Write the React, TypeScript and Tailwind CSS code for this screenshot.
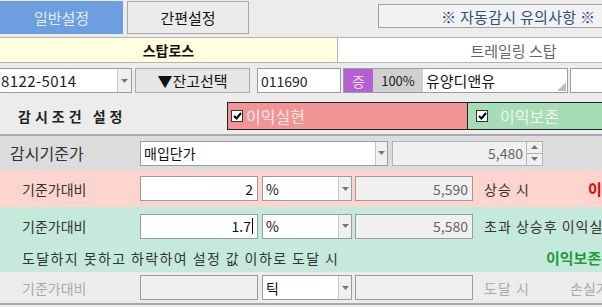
import React from "react";

const Arrow = ({ w = 13 }: { w?: number }) => (
  <div className="h-full shrink-0 flex items-center justify-center bg-[#f0f0f0] border-l border-[#c8c8c8]" style={{ width: w }}>
    <svg width="7" height="4" viewBox="0 0 7 4"><path d="M0 0H7L3.5 4Z" fill="#777" /></svg>
  </div>
);

const Check = () => (
  <div className="w-[12px] h-[12px] shrink-0 bg-white border border-[#333] flex items-center justify-center">
    <svg width="9" height="8" viewBox="0 0 9 8"><path d="M1 4L3.5 6.5L8 1" stroke="#000" strokeWidth="2" fill="none" /></svg>
  </div>
);

const Combo = ({ w, text, arrowW = 13 }: { w: number; text: string; arrowW?: number }) => (
  <div className="h-[25px] bg-white border border-[#9c9c9c] flex items-stretch shrink-0" style={{ width: w }}>
    <div className="flex-1 flex items-center pl-[3px] text-[14px] text-[#111]">{text}</div>
    <Arrow w={arrowW} />
  </div>
);

const Num = ({ w, text, ro, cursor }: { w: number; text: string; ro?: boolean; cursor?: boolean }) => (
  <div
    className={`h-[25px] border border-[#9c9c9c] flex items-center justify-end pr-[4px] text-[14px] shrink-0 ${ro ? "bg-[#f0f0f0] text-[#666]" : "bg-white text-[#111]"}`}
    style={{ width: w }}
  >
    {text}
    {cursor && <span className="inline-block w-[1px] h-[16px] bg-black ml-[1px]" />}
  </div>
);

export default function App() {
  return (
    <div className="w-[602px] h-[307px] overflow-hidden bg-[#ececec] font-['Noto_Sans_CJK_KR',sans-serif] text-[13px] text-[#222] leading-none">
      {/* top buttons */}
      <div className="h-[37px] flex items-start pt-[1px]">
        <div className="w-[123px] shrink-0 h-[33px] bg-[#6d9fe0] text-[#e3ecf8] flex items-center justify-center text-[15px]">일반설정</div>
        <div className="ml-[4px] w-[122px] shrink-0 h-[33px] border border-[#a8a8a8] bg-[#ebebeb] flex items-center justify-center text-[15px] text-[#111]">간편설정</div>
        <div className="ml-[129px] mt-[3px] w-[260px] shrink-0 h-[24px] border border-[#a0a0a0] bg-[#f2f2f2] text-[#2d4f88] flex items-center pl-[62px] text-[15px] tracking-[0.3px] whitespace-nowrap">※ 자동감시 유의사항 ※</div>
      </div>
      {/* tabs */}
      <div className="h-[26px] flex border-y border-[#b4b4b4]">
        <div className="w-[337px] shrink-0 bg-[#ffffdf] flex items-center justify-center font-bold text-[14px] text-[#111]">스탑로스</div>
        <div className="w-[340px] shrink-0 bg-white border-l border-[#b4b4b4] flex items-center justify-center pl-[12px] text-[15px] text-[#666]">트레일링 스탑</div>
      </div>
      {/* account row */}
      <div className="h-[30px] flex items-end">
        <div className="w-[132px] shrink-0 h-[25px] bg-white border-y border-r border-[#9c9c9c] flex items-stretch">
          <div className="flex-1 flex items-center pl-[1px] text-[15px] tracking-[0.4px]">8122-5014</div>
          <Arrow w={14} />
        </div>
        <div className="ml-[3px] w-[115px] shrink-0 h-[25px] border border-[#acacac] bg-[#e6e6e6] flex items-center justify-center text-[15px] text-[#111]">▼잔고선택</div>
        <div className="ml-[7px] w-[84px] shrink-0 h-[25px] bg-white border border-[#9c9c9c] flex items-center pl-[3px] text-[14px]">011690</div>
        <div className="ml-[2px] w-[225px] shrink-0 h-[25px] bg-white border border-[#9c9c9c] flex items-stretch relative">
          <div className="w-[29px] shrink-0 bg-[#b45fd2] text-[#f2dcf8] flex items-center justify-center text-[14px]">증</div>
          <div className="w-[50px] shrink-0 bg-[#d0d0d0] flex items-center justify-center text-[13px] text-[#222]">100%</div>
          <div className="flex-1 flex items-center pl-[3px] text-[15px] text-[#111]">유양디앤유</div>
          <svg className="absolute right-[1px] bottom-[1px]" width="9" height="9" viewBox="0 0 9 9"><path d="M9 0V9H0Z" fill="#bdbdbd" /></svg>
        </div>
        <div className="ml-[2px] w-[40px] shrink-0 h-[25px] bg-white border border-[#9c9c9c]" />
      </div>
      {/* monitoring condition */}
      <div className="h-[43px] flex items-start pt-[9px] border-b-2 border-[#a9a9a9]">
        <div className="w-[227px] shrink-0 h-[28px] flex items-center pl-[18px] font-bold text-[14px] tracking-[4px] text-[#222]">감시조건 설정</div>
        <div className="w-[241px] shrink-0 h-[28px] bg-[#f39494] border border-[#222] flex items-center pl-[3px] gap-[3px]">
          <Check />
          <span className="text-[16px] text-[#fde8e8]">이익실현</span>
        </div>
        <div className="w-[150px] shrink-0 h-[28px] bg-[#a6dcb6] border-y border-[#222] flex items-center pl-[8px] gap-[12px]">
          <Check />
          <span className="text-[16px] text-[#eaf7ee]">이익보존</span>
        </div>
      </div>
      {/* base price */}
      <div className="h-[34px] bg-[#dcdcdc] flex items-center">
        <div className="w-[140px] shrink-0 pl-[10px] text-[16px] text-[#333]">감시기준가</div>
        <Combo w={248} text="매입단가" arrowW={12} />
        <div className="ml-[4px] w-[135px] shrink-0 h-[25px] bg-[#f0f0f0] border border-[#b4b4b4] flex items-center justify-end pr-[3px] text-[14px] text-[#666]">5,480</div>
        <div className="w-[16px] shrink-0 h-[25px] border border-[#b4b4b4] border-l-0 flex flex-col bg-[#f0f0f0]">
          <div className="flex-1 flex items-center justify-center border-b border-[#b4b4b4]"><svg width="7" height="4" viewBox="0 0 7 4"><path d="M0 4H7L3.5 0Z" fill="#777" /></svg></div>
          <div className="flex-1 flex items-center justify-center"><svg width="7" height="4" viewBox="0 0 7 4"><path d="M0 0H7L3.5 4Z" fill="#777" /></svg></div>
        </div>
      </div>
      {/* pink row */}
      <div className="h-[37px] bg-[#fcd5ce] flex items-center whitespace-nowrap">
        <div className="w-[140px] shrink-0 pl-[22px] text-[14px] text-[#333]">기준가대비</div>
        <Num w={118} text="2" />
        <div className="ml-[4px] shrink-0"><Combo w={90} text="%" /></div>
        <div className="ml-[3px] shrink-0"><Num w={118} text="5,590" ro /></div>
        <div className="ml-[11px] w-[104px] shrink-0 text-[14px] text-[#333] tracking-[1px]">상승 시</div>
        <div className="shrink-0 font-bold text-[15px] text-[#e00000]">이익실현</div>
      </div>
      {/* green rows */}
      <div className="h-[65px] bg-[#c5eadb] flex flex-col whitespace-nowrap">
        <div className="h-[36px] flex items-center pt-[2px]">
          <div className="w-[140px] shrink-0 pl-[22px] text-[14px] text-[#333]">기준가대비</div>
          <Num w={118} text="1.7" cursor />
          <div className="ml-[4px] shrink-0"><Combo w={90} text="%" /></div>
          <div className="ml-[3px] shrink-0"><Num w={118} text="5,580" ro /></div>
          <div className="ml-[11px] shrink-0 text-[14px] text-[#333] tracking-[1px]">초과 상승후 이익실현</div>
        </div>
        <div className="flex-1 flex items-center">
          <div className="w-[546px] shrink-0 pl-[22px] text-[14px] text-[#333] tracking-[1.4px]">도달하지 못하고 하락하여 설정 값 이하로 도달 시</div>
          <div className="shrink-0 font-bold text-[15px] text-[#1f9a3a]">이익보존</div>
        </div>
      </div>
      {/* gray row */}
      <div className="h-[33px] bg-[#ececec] border-b-2 border-[#a9a9a9] flex items-center whitespace-nowrap">
        <div className="w-[140px] shrink-0 pl-[22px] text-[14px] text-[#aaa]">기준가대비</div>
        <Num w={118} text="" ro />
        <div className="ml-[4px] shrink-0"><Combo w={90} text="틱" /></div>
        <div className="ml-[3px] shrink-0"><Num w={118} text="" ro /></div>
        <div className="ml-[11px] w-[86px] shrink-0 text-[14px] text-[#aaa] tracking-[1px]">도달 시</div>
        <div className="shrink-0 text-[14px] text-[#aaa]">손실가</div>
      </div>
    </div>
  );
}
